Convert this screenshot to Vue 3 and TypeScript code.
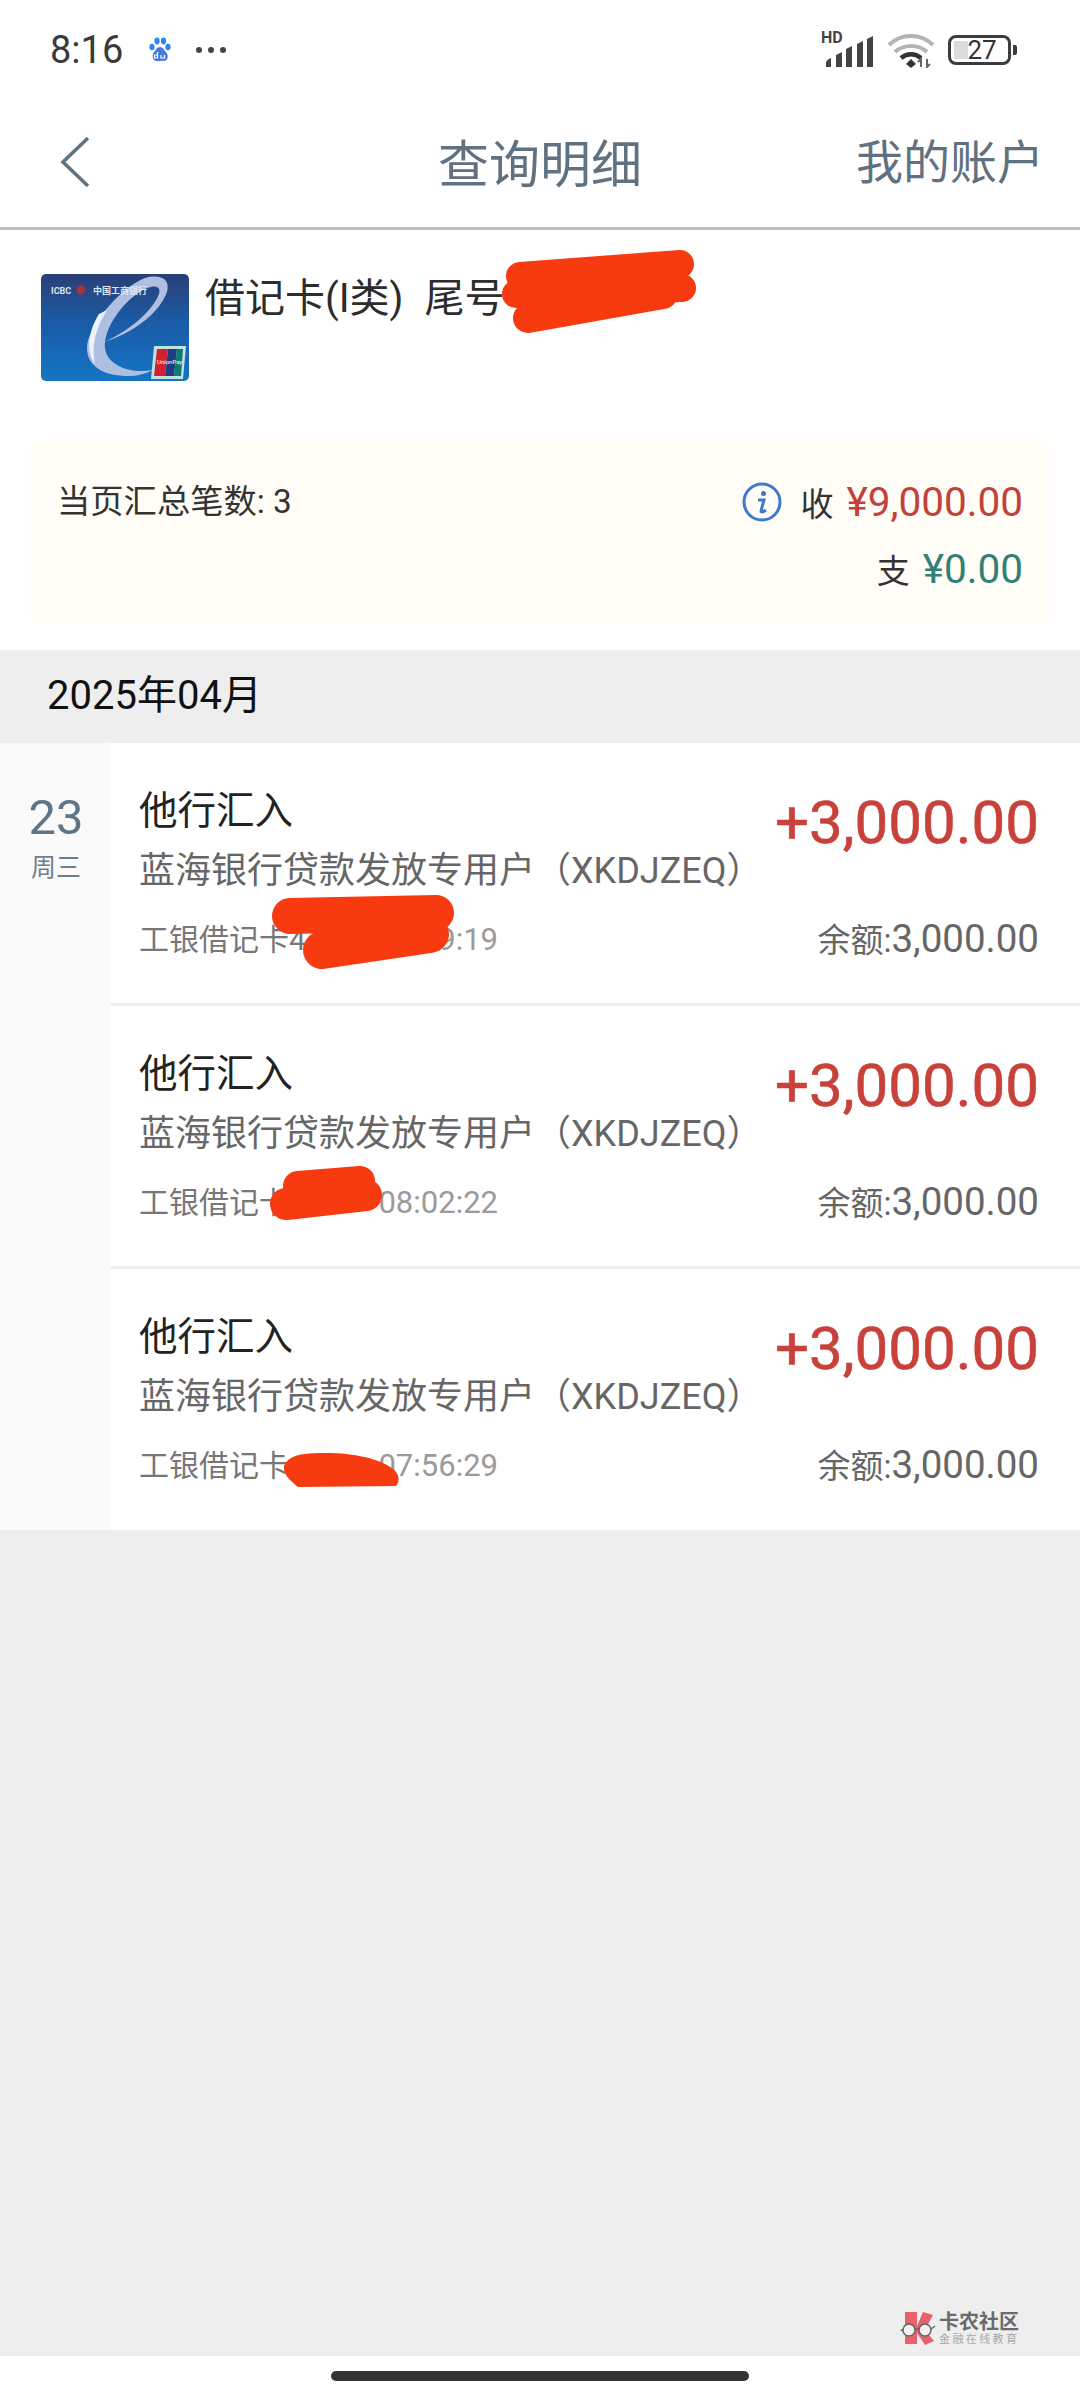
<script setup lang="ts">
interface Txn {
  card: string
  time: string
}

const txns: Txn[] = [
  { card: '工银借记卡4', time: '9:19' },
  { card: '工银借记卡', time: '08:02:22' },
  { card: '工银借记卡', time: '07:56:29' }
]
</script>

<template>
  <div class="page">
    <div class="status">
      <span class="clock">8:16</span>
      <svg class="paw" viewBox="0 0 24 26">
        <ellipse cx="4" cy="10" rx="2.600" ry="3.200" fill="#2b86ee" />
        <ellipse cx="9" cy="4" rx="2.600" ry="3.400" fill="#2b86ee" />
        <ellipse cx="15.500" cy="4" rx="2.600" ry="3.400" fill="#2b86ee" />
        <ellipse cx="20" cy="10" rx="2.600" ry="3.200" fill="#2b86ee" />
        <path d="M12 10c-3 0-4 3-6 5-2 2-2 8 2 9 2 .6 6-.6 8 0 4 0 5-6 2-9-2-2-3-5-6-5z" fill="#4a78e6" />
        <path d="M9.500 15v6h-3v-3h3M13 18v3h3.500v-3" fill="none" stroke="#fff" stroke-width="1.200" />
      </svg>
      <span class="more"><i></i><i></i><i></i></span>
      <div class="status-right">
        <div class="signal">
          <span class="hd">HD</span>
          <svg class="bars" viewBox="0 0 48 31">
            <path d="M1 31v-4q0-3 5-5v9zM11 31V19l6-3v15zM21 31V13l6-3v21zM32 31V8l6-3v26zM42 31V3l6-3v31z" fill="#444" />
          </svg>
        </div>
        <svg class="wifi" viewBox="0 0 48 35">
          <path d="M2 12C14 0 34 0 46 12" fill="none" stroke="#b4b4b4" stroke-width="4" />
          <path d="M8 19c9-8 23-8 32 0" fill="none" stroke="#b4b4b4" stroke-width="4" />
          <path d="M14 25c6-5 14-5 20 0" fill="none" stroke="#333" stroke-width="4.500" />
          <path d="M24 26l5 5-5 4-5-4z" fill="#333" />
          <path d="M34 34v-8l-3 3M40 26v8l3-3" fill="none" stroke="#666" stroke-width="2" />
        </svg>
        <div class="battery">
          <span class="level"></span>
          <span class="pct">27</span>
        </div>
        <span class="nub"></span>
      </div>
    </div>

    <header class="nav">
      <svg class="back" viewBox="0 0 30 52">
        <path d="M28 2 3 26l25 24" fill="none" stroke="#5f7482" stroke-width="3.600" />
      </svg>
      <h1 class="nav-title">查询明细</h1>
      <span class="nav-link">我的账户</span>
    </header>

    <section class="card-head">
      <svg class="card-img" viewBox="0 0 148 107">
        <defs>
          <linearGradient id="cardBg" x1="0" y1="0" x2="0" y2="1">
            <stop offset="0" stop-color="#2a3f77" />
            <stop offset="0.45" stop-color="#1a5ba6" />
            <stop offset="1" stop-color="#1475c4" />
          </linearGradient>
        </defs>
        <rect width="148" height="107" rx="5" fill="url(#cardBg)" />
        <path d="M63 68C90 60 118 40 126 18 130 4 118 0 104 4 78 14 46 54 46 74 46 92 62 102 88 102 96 102 104 100 112 96 90 100 66 92 64 74 62 54 84 24 106 14 116 10 120 14 118 20 112 36 90 56 63 68Z" fill="#aebfe2" />
        <path d="M58 40C48 56 44 76 54 90 50 72 54 56 66 36Z" fill="#eef3fb" />
        <text x="10" y="20" class="card-txt">ICBC</text>
        <circle cx="40" cy="16" r="4.500" fill="#a8323a" />
        <text x="52" y="20" class="card-txt">中国工商银行</text>
        <g>
          <path d="M113 72h32l-3 33h-32z" fill="#bfe2e0" />
          <path d="M116 75h11l-3 27h-11z" fill="#d32030" />
          <path d="M127 75h9l-3 27h-9z" fill="#1d3f82" />
          <path d="M136 75h6l-2 27h-7z" fill="#0d7a74" />
          <text x="116" y="90" class="card-up">UnionPay</text>
        </g>
      </svg>
      <span class="card-name">借记卡(I类)<span class="card-tail">尾号</span></span>
    </section>

    <section class="summary">
      <div class="sum-count">当页汇总笔数: 3</div>
      <div class="sum-right">
        <div class="sum-line">
          <svg class="info" viewBox="0 0 40 40">
            <circle cx="20" cy="20" r="18" fill="none" stroke="#3f78d0" stroke-width="3" />
            <circle cx="21.500" cy="11.500" r="2.500" fill="#3f78d0" />
            <path d="M16 18h6l-3 11c0 1.500 2 1.500 5-1" fill="none" stroke="#3f78d0" stroke-width="3" />
          </svg>
          <span class="sum-label">收</span>
          <span class="sum-in">¥9,000.00</span>
        </div>
        <div class="sum-line">
          <span class="sum-label">支</span>
          <span class="sum-out">¥0.00</span>
        </div>
      </div>
    </section>

    <div class="month">2025年04月</div>

    <section class="day">
      <div class="date">
        <div class="date-num">23</div>
        <div class="date-week">周三</div>
      </div>
      <div class="rows">
        <div v-for="(t, i) in txns" :key="i" class="row">
          <div class="row-left">
            <div class="row-title">他行汇入</div>
            <div class="row-sub">蓝海银行贷款发放专用户（XKDJZEQ）</div>
            <div class="row-meta">
              <span>{{ t.card }}</span>
              <span class="row-time">{{ t.time }}</span>
            </div>
          </div>
          <div class="row-right">
            <div class="row-amount">+3,000.00</div>
            <div class="row-balance">余额:<span class="row-bal-num">3,000.00</span></div>
          </div>
        </div>
      </div>
    </section>

    <div class="rest">
      <div class="mark">
        <svg class="mark-logo" viewBox="0 0 36 34">
          <path d="M5 1h12v14l6-14 10 3-8 15 9 11-9 4-8-12v11H5z" fill="#e9616b" />
          <circle cx="9" cy="19" r="6" fill="#f5f1ee" stroke="#666" stroke-width="1.500" />
          <circle cx="25" cy="19" r="6" fill="#f5f1ee" stroke="#666" stroke-width="1.500" />
          <path d="M15 18h4M3 18 1 20M31 18l4-3" stroke="#666" stroke-width="1.500" />
        </svg>
        <div class="mark-text">
          <div class="mark-name">卡农社区</div>
          <div class="mark-sub">金融在线教育</div>
        </div>
      </div>
    </div>

    <div class="home">
      <span class="home-bar"></span>
    </div>

    <!-- hand-drawn redaction marks sit over the numbers -->
    <svg class="scribbles" viewBox="0 0 1080 2400">
      <g fill="none" stroke="#f73a10" stroke-linecap="round">
        <path d="M520 276 680 264" stroke-width="28" />
        <path d="M516 294 682 288" stroke-width="28" />
        <path d="M528 318 663 294" stroke-width="30" />
        <path d="M290 916 436 913" stroke-width="36" />
        <path d="M322 950 430 934" stroke-width="38" />
        <path d="M298 1186 360 1181" stroke-width="30" />
        <path d="M286 1204 366 1195" stroke-width="32" />
      </g>
      <path d="M284 1466C288 1456 300 1453 320 1453 350 1452 378 1458 392 1468 400 1474 400 1482 396 1486L298 1487C290 1480 283 1475 284 1466Z" fill="#f73a10" />
    </svg>
  </div>
</template>

<style scoped>
.page {
  position: relative;
  width: 1080px;
  height: 2400px;
  display: flex;
  flex-direction: column;
  background: #fff;
  overflow: hidden;
  font-family: Roboto, "Noto Sans CJK SC", sans-serif;
  color: #333;
}

.status {
  height: 100px;
  display: flex;
  align-items: center;
  padding: 0 63px 0 50px;
  flex: none;
}
.clock {
  font-size: 38px;
  color: #3a3a3a;
  width: 98px;
}
.paw {
  width: 24px;
  height: 26px;
}
.more {
  display: flex;
  gap: 6px;
  margin-left: 24px;
}
.more i {
  width: 6px;
  height: 6px;
  border-radius: 50%;
  background: #444;
}
.status-right {
  margin-left: auto;
  display: flex;
  align-items: center;
}
.signal {
  position: relative;
  width: 49px;
  height: 33px;
  margin-right: 14px;
}
.hd {
  position: absolute;
  left: -3px;
  top: -3px;
  font-size: 16px;
  font-weight: 700;
  line-height: 14px;
  color: #444;
}
.bars {
  position: absolute;
  left: 1px;
  bottom: 0;
  width: 48px;
  height: 31px;
}
.wifi {
  width: 48px;
  height: 35px;
  margin-right: 13px;
}
.battery {
  position: relative;
  width: 63px;
  height: 30px;
  box-sizing: border-box;
  border: 3px solid #3c3c3c;
  border-radius: 8px;
  display: flex;
  align-items: center;
  justify-content: center;
}
.level {
  position: absolute;
  left: 3px;
  top: 3px;
  bottom: 3px;
  width: 14px;
  background: #dcdcdc;
}
.pct {
  position: relative;
  font-size: 26px;
  color: #333;
  margin-left: 5px;
}
.nub {
  width: 4px;
  height: 10px;
  margin-left: 2px;
  background: #3c3c3c;
  border-radius: 0 2px 2px 0;
}

.nav {
  height: 130px;
  flex: none;
  box-sizing: border-box;
  border-bottom: 3px solid #b6c3ca;
  position: relative;
  display: flex;
  align-items: center;
  justify-content: center;
  padding-bottom: 6px;
}
.back {
  position: absolute;
  left: 60px;
  top: 36px;
  width: 30px;
  height: 52px;
}
.nav-title {
  margin: 0;
  font-size: 51px;
  font-weight: 400;
  color: #5f7282;
}
.nav-link {
  position: absolute;
  right: 36px;
  top: 24px;
  font-size: 47px;
  color: #5f7282;
}

.card-head {
  flex: none;
  height: 210px;
  box-sizing: border-box;
  padding: 44px 0 0 41px;
  display: flex;
  align-items: flex-start;
}
.card-img {
  width: 148px;
  height: 107px;
  flex: none;
}
.card-txt {
  font-size: 9px;
  font-weight: 700;
  fill: #dfe6f2;
}
.card-up {
  font-size: 6px;
  fill: #fff;
}
.card-name {
  font-size: 40px;
  line-height: 50px;
  margin-left: 16px;
  color: #2c2c2c;
  white-space: pre;
}
.card-tail {
  margin-left: 21px;
}

.summary {
  flex: none;
  box-sizing: border-box;
  height: 182px;
  margin: 0 30px;
  padding: 37px 27px 0;
  background: #fffdf6;
  border-radius: 8px;
  display: flex;
  justify-content: space-between;
}
.sum-count {
  font-size: 33.300px;
  line-height: 50px;
  color: #333;
}
.sum-right {
  display: flex;
  flex-direction: column;
  gap: 17px;
  align-items: flex-end;
}
.sum-line {
  height: 50px;
  display: flex;
  align-items: center;
}
.info {
  width: 40px;
  height: 40px;
  margin-right: 19px;
}
.sum-label {
  font-size: 33px;
  color: #333;
  margin-right: 13px;
}
.sum-in {
  font-size: 40.500px;
  color: #c4403a;
}
.sum-out {
  font-size: 40.500px;
  color: #2f8177;
}

.month {
  flex: none;
  margin-top: 28px;
  height: 93px;
  box-sizing: border-box;
  padding-left: 47px;
  line-height: 92px;
  background: #eeeeee;
  font-size: 40px;
  color: #111;
}

.day {
  flex: none;
  display: flex;
  background: #fff;
}
.date {
  width: 110px;
  flex: none;
  background: #fafafa;
  text-align: center;
  padding: 45px 0 0 2px;
  box-sizing: border-box;
}
.date-num {
  font-size: 49px;
  line-height: 60px;
  color: #5f7585;
}
.date-week {
  margin-top: 3px;
  font-size: 25px;
  line-height: 34px;
  color: #6a7f8e;
}
.rows {
  flex: 1;
  min-width: 0;
}
.row {
  height: 263px;
  box-sizing: border-box;
  border-bottom: 3px solid #eeeeee;
  padding: 0 41px 0 29px;
  display: flex;
  justify-content: space-between;
}
.row:last-child {
  height: 261px;
  border-bottom: 0;
}
.row-left {
  padding-top: 38px;
}
.row-title {
  font-size: 38.500px;
  line-height: 60px;
  color: #222;
}
.row-sub {
  font-size: 36px;
  line-height: 60px;
  color: #666;
  white-space: nowrap;
}
.row-meta {
  margin-top: 9px;
  width: 359px;
  display: flex;
  justify-content: space-between;
  font-size: 30px;
  line-height: 60px;
  color: #777;
}
.row-time {
  color: #9a9a9a;
  font-size: 31px;
}
.row-right {
  padding-top: 40px;
  text-align: right;
}
.row-amount {
  font-size: 60px;
  line-height: 80px;
  color: #c8413b;
  -webkit-text-stroke: 0.6px #c8413b;
  white-space: nowrap;
}
.row-balance {
  margin-top: 46px;
  font-size: 33px;
  line-height: 60px;
  color: #666;
  white-space: nowrap;
}
.row-bal-num {
  font-size: 38.500px;
}

.rest {
  flex: 1;
  background: #eeeeee;
  position: relative;
}
.mark {
  position: absolute;
  left: 900px;
  bottom: 10px;
  display: flex;
  gap: 3px;
}
.mark-logo {
  width: 36px;
  height: 34px;
}
.mark-name {
  font-size: 20px;
  font-weight: 700;
  line-height: 22px;
  color: #6a6a6a;
}
.mark-sub {
  font-size: 11px;
  line-height: 13px;
  letter-spacing: 2.400px;
  color: #a8a8a8;
}

.home {
  height: 44px;
  flex: none;
  background: #fff;
  display: flex;
  justify-content: center;
  padding-top: 15px;
  box-sizing: border-box;
}
.home-bar {
  width: 418px;
  height: 10px;
  border-radius: 5px;
  background: #333;
}

.scribbles {
  position: absolute;
  left: 0;
  top: 0;
  width: 1080px;
  height: 2400px;
  pointer-events: none;
}
</style>
